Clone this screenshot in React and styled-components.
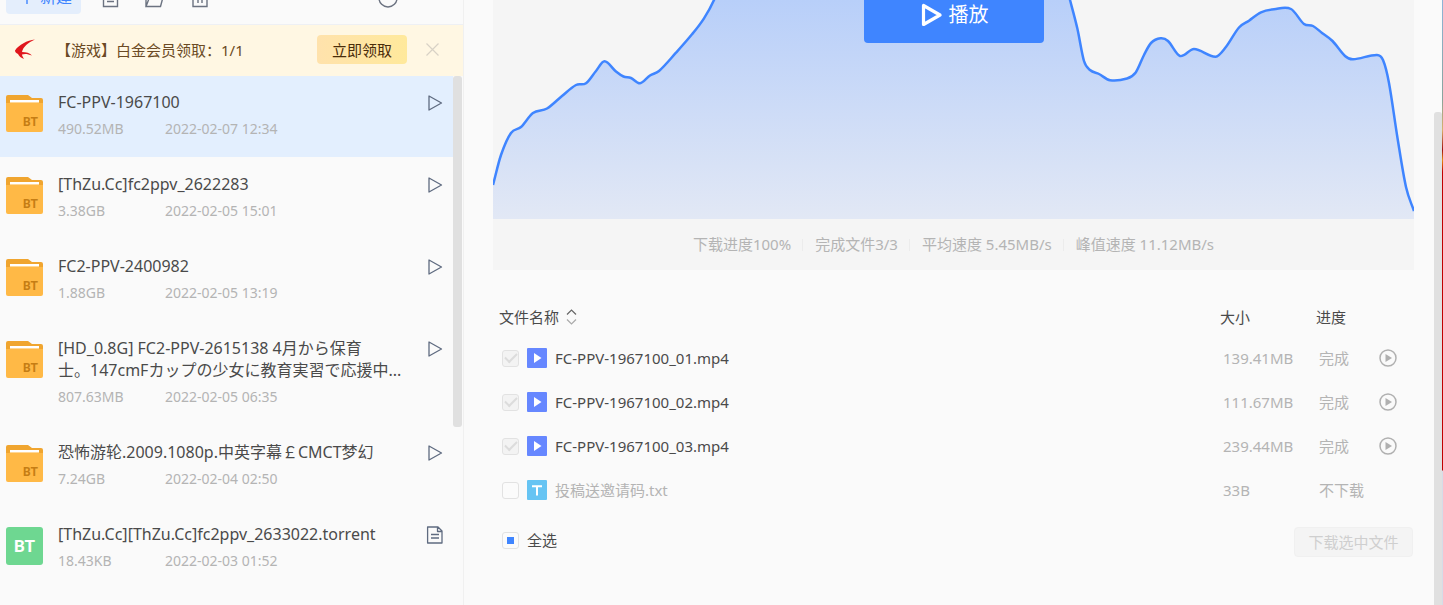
import { useEffect, useRef } from "react";
import styled, { createGlobalStyle, css } from "styled-components";

const tasks = [
  { name: "FC-PPV-1967100", size: "490.52MB", date: "2022-02-07 12:34", type: "folder", active: true },
  { name: "[ThZu.Cc]fc2ppv_2622283", size: "3.38GB", date: "2022-02-05 15:01", type: "folder" },
  { name: "FC2-PPV-2400982", size: "1.88GB", date: "2022-02-05 13:19", type: "folder" },
  {
    name: "[HD_0.8G] FC2-PPV-2615138 4月から保育\n士。147cmFカップの少女に教育実習で応援中...",
    size: "807.63MB",
    date: "2022-02-05 06:35",
    type: "folder",
  },
  { name: "恐怖游轮.2009.1080p.中英字幕￡CMCT梦幻", size: "7.24GB", date: "2022-02-04 02:50", type: "folder" },
  { name: "[ThZu.Cc][ThZu.Cc]fc2ppv_2633022.torrent", size: "18.43KB", date: "2022-02-03 01:52", type: "torrent" },
];

const files = [
  { name: "FC-PPV-1967100_01.mp4", size: "139.41MB", state: "完成", done: true },
  { name: "FC-PPV-1967100_02.mp4", size: "111.67MB", state: "完成", done: true },
  { name: "FC-PPV-1967100_03.mp4", size: "239.44MB", state: "完成", done: true },
  { name: "投稿送邀请码.txt", size: "33B", state: "不下载", done: false },
];

const stats = ["下载进度100%", "完成文件3/3", "平均速度 5.45MB/s", "峰值速度 11.12MB/s"];

// download speed samples, [x, y] in chart units
const speed = [
  [0, 185], [8, 155], [18, 133], [28, 127], [40, 113], [54, 108.5], [69, 96], [83, 85], [93, 83.3],
  [103, 71], [111.5, 61.3], [123, 71.5], [130.5, 76.5], [138, 78], [147, 83.3], [157, 75.5], [166, 71],
  [183, 52.7], [199, 34.3], [211, 18.3], [221, 0], [240, -48], [300, -140], [520, -140], [565, -45],
  [577, 0], [584.3, 28.3], [591, 61], [597, 70], [606, 74], [617, 80.2], [634, 78.5], [642.7, 72.5],
  [651, 55], [658, 43], [667.5, 38.3], [675, 41], [687, 56], [701, 49], [722.7, 56.7], [732.7, 47.3],
  [746, 27.5], [756, 20.7], [768, 12.3], [781, 9.3], [798, 9], [811, 24], [820, 26], [829, 33],
  [839.5, 41], [852, 56], [860, 59.3], [884, 55], [890, 60], [896, 83], [904.5, 138], [913, 187], [921, 211],
];

const slopeAt = (pts, i) => {
  const [ax, ay] = pts[i - 1] || pts[i];
  const [bx, by] = pts[i + 1] || pts[i];
  return (by - ay) / (bx - ax);
};

const toCurve = (pts) =>
  pts.reduce((d, [x, y], i) => {
    if (i === 0) return `M${x} ${y}`;
    const [px, py] = pts[i - 1];
    const h = (x - px) / 3;
    return `${d}C${px + h} ${py + h * slopeAt(pts, i - 1)} ${x - h} ${y - h * slopeAt(pts, i)} ${x} ${y}`;
  }, "");

const curve = toCurve(speed);

export default function App() {
  return (
    <>
      <GlobalStyle />
      <Page>
        <Sidebar>
          <Toolbar />
          <Notice />
          <TaskArea>
            <TaskList>
              {tasks.map((task) => (
                <TaskItem key={task.name} {...task} />
              ))}
            </TaskList>
            <ListGutter>
              <ListThumb />
            </ListGutter>
          </TaskArea>
        </Sidebar>
        <Main>
          <SpeedPanel />
          <FileTable />
          <Footer>
            <SelectAll />
            <DownloadButton type="button" disabled>
              下载选中文件
            </DownloadButton>
          </Footer>
        </Main>
        <PageGutter>
          <PageThumb />
        </PageGutter>
        <WindowEdge />
      </Page>
    </>
  );
}

const Toolbar = () => (
  <ToolbarWrap>
    <NewButton type="button">
      <svg width="14" height="14" viewBox="0 0 14 14" stroke="currentColor" strokeWidth="1.4">
        <path d="M7 0v14M0 7h14" />
      </svg>
      新建
    </NewButton>
    <ToolButton type="button" aria-label="file" $left={21}>
      <svg width="17" height="20" viewBox="0 0 17 20">
        <path d="M1.5 1.5h14v17h-14zM5 9h7M5 13.5h7" />
      </svg>
    </ToolButton>
    <ToolButton type="button" aria-label="folder" $left={26}>
      <svg width="20" height="20" viewBox="0 0 20 20">
        <path d="M1 18.5V2.500h6l2 3h7v3M1 18.500h14.500l3.500-13H6z" />
      </svg>
    </ToolButton>
    <ToolButton type="button" aria-label="delete" $left={26}>
      <svg width="18" height="20" viewBox="0 0 18 20">
        <path d="M2 4.500v14h14v-14M0 4.500h18M6 1.500h6M7 9v6M11 9v6" />
      </svg>
    </ToolButton>
    <ToolButton type="button" aria-label="search" $end>
      <svg width="20" height="20" viewBox="0 0 20 20">
        <circle cx="10" cy="10" r="9" />
      </svg>
    </ToolButton>
  </ToolbarWrap>
);

const Notice = () => (
  <NoticeWrap>
    <svg width="22" height="22" viewBox="0 0 22 22">
      <path
        fill="#e0161c"
        d="M21 .5C13 1.500 5 5.500 1 11.500c0 1.500 1 2.500 3 3.500 1 2 3 4 6 5-1-2-2-3-2-4.500 3-1 6-.5 10 1-2-2.500-6-3.500-10-3.500C9 8 14 3.500 21 .5z"
      />
    </svg>
    <NoticeText>【游戏】白金会员领取：1/1</NoticeText>
    <ClaimButton type="button">立即领取</ClaimButton>
    <CloseButton type="button" aria-label="close">
      <svg width="13" height="13" viewBox="0 0 13 13" stroke="currentColor" strokeWidth="1.2">
        <path d="M.5.5l12 12M12.500.5l-12 12" />
      </svg>
    </CloseButton>
  </NoticeWrap>
);

const TaskItem = ({ name, size, date, type, active }) => (
  <TaskRow $active={active}>
    {type === "folder" ? <FolderIcon /> : <TorrentIcon>BT</TorrentIcon>}
    <TaskDesc>
      <TaskName>{name}</TaskName>
      <TaskMeta>
        <span>{size}</span>
        <span>{date}</span>
      </TaskMeta>
    </TaskDesc>
    <RowButton type="button" aria-label={type === "folder" ? "play" : "open"}>
      {type === "folder" ? (
        <svg width="16" height="18" viewBox="0 0 16 18">
          <path d="M2 2v14l12.500-7z" />
        </svg>
      ) : (
        <svg width="18" height="18" viewBox="0 0 18 18">
          <path d="M1.600 1h10.400l4 4v12h-14.400zM11.500 1v4.500H16M5 8.500h8M5 12h8" />
        </svg>
      )}
    </RowButton>
  </TaskRow>
);

const FolderIcon = () => (
  <FolderWrap>
    <svg width="37" height="37" viewBox="0 0 37 37">
      <path fill="#f0a52f" d="M2 0h20l4 3h9a2 2 0 0 1 2 2v10H0V2a2 2 0 0 1 2-2z" />
      <path fill="#fff" d="M4 5h29v2H4z" />
      <path fill="#ffd795" d="M4 7h29v1H4z" />
      <path fill="#ffb946" d="M0 8h37v27a2 2 0 0 1-2 2H2a2 2 0 0 1-2-2z" />
    </svg>
    <span>BT</span>
  </FolderWrap>
);

const SpeedPanel = () => (
  <Panel>
    <Chart viewBox="0 0 921 219" preserveAspectRatio="none">
      <defs>
        <linearGradient id="speedFill" x1="0" y1="0" x2="0" y2="219" gradientUnits="userSpaceOnUse">
          <stop offset="0" stopColor="#b8cff9" />
          <stop offset="1" stopColor="#e2e8f5" />
        </linearGradient>
      </defs>
      <path d={`${curve}V219H0z`} fill="url(#speedFill)" />
      <path d={curve} fill="none" stroke="#3f85ff" strokeWidth="2.5" />
    </Chart>
    <PlayButton type="button">
      <svg width="21" height="24" viewBox="0 0 21 24" fill="none" stroke="currentColor" strokeWidth="3.200" strokeLinejoin="round">
        <path d="M2.500 2.500v19L19 12z" />
      </svg>
      播放
    </PlayButton>
    <Stats>
      {stats.map((stat) => (
        <li key={stat}>{stat}</li>
      ))}
    </Stats>
  </Panel>
);

const FileTable = () => (
  <Table>
    <thead>
      <tr>
        <th>
          <SortButton type="button">
            文件名称
            <svg width="11" height="16" viewBox="0 0 11 16" fill="none">
              <path d="M1 5.500L5.500 1 10 5.500" stroke="#666" strokeWidth="1.2" />
              <path d="M1 10.500L5.500 15l4.500-4.500" stroke="#aaa" strokeWidth="1.2" />
            </svg>
          </SortButton>
        </th>
        <SizeHead>大小</SizeHead>
        <StateHead>进度</StateHead>
        <ActionHead aria-label="play" />
      </tr>
    </thead>
    <tbody>
      {files.map(({ name, size, state, done }) => (
        <tr key={name}>
          <td>
            <FileLabel $muted={!done}>
              <Checkbox type="checkbox" defaultChecked={done} disabled={done} />
              {done ? <VideoIcon /> : <TextIcon />}
              {name}
            </FileLabel>
          </td>
          <td>{size}</td>
          <td>{state}</td>
          <td>
            {done && (
              <CircleButton type="button" aria-label="play">
                <svg width="18" height="18" viewBox="0 0 18 18">
                  <circle cx="9" cy="9" r="8" fill="none" stroke="currentColor" strokeWidth="1.500" />
                  <path d="M6.500 5v8L13 9z" fill="currentColor" />
                </svg>
              </CircleButton>
            )}
          </td>
        </tr>
      ))}
    </tbody>
  </Table>
);

const VideoIcon = () => (
  <svg width="20" height="20" viewBox="0 0 20 20">
    <rect width="20" height="20" rx="1" fill="#6687ff" />
    <path d="M7 5v10l7.500-5z" fill="#fff" />
  </svg>
);

const TextIcon = () => (
  <svg width="20" height="20" viewBox="0 0 20 20">
    <rect width="20" height="20" rx="1" fill="#66c4f3" />
    <path d="M5 6.200h10M10 6v9.500" stroke="#fff" strokeWidth="2" />
  </svg>
);

const SelectAll = () => {
  const ref = useRef(null);

  useEffect(() => {
    ref.current.indeterminate = true;
  }, []);

  return (
    <AllLabel>
      <Checkbox type="checkbox" ref={ref} />
      全选
    </AllLabel>
  );
};

const GlobalStyle = createGlobalStyle`
  * {
    box-sizing: border-box;
  }
  body {
    margin: 0;
    overflow: hidden;
    background: #fafafa;
    color: #4a4a4a;
    font-family: "Noto Sans", "Noto Sans CJK SC", sans-serif;
    font-size: 15px;
    line-height: 22px;
  }
  ul {
    margin: 0;
    padding: 0;
    list-style: none;
  }
  button {
    border: 0;
    padding: 0;
    background: none;
    color: inherit;
    font: inherit;
  }
  svg {
    display: block;
    flex-shrink: 0;
  }
`;

const Page = styled.div`
  display: flex;
  height: 100vh;
  overflow: hidden;
`;

const Sidebar = styled.aside`
  display: flex;
  flex-direction: column;
  flex: 0 0 464px;
  border-right: 1px solid #f0f0f0;
`;

const ToolbarWrap = styled.div`
  display: flex;
  align-items: flex-end;
  height: 25px;
  padding: 0 65px 10px 6px;
  border-bottom: 1px solid #eef0f4;
  overflow: hidden;
`;

const NewButton = styled.button`
  display: flex;
  align-items: center;
  flex-shrink: 0;
  gap: 6px;
  width: 75px;
  height: 34px;
  padding-left: 14px;
  border-radius: 4px;
  background: #e4eefc;
  color: #3f85ff;
  font-size: 16px;
`;

const ToolButton = styled.button`
  margin: 0 0 6px ${(props) => (props.$end ? "auto" : `${props.$left}px`)};

  svg {
    fill: none;
    stroke: #6b7280;
    stroke-width: 1.4;
  }
`;

const NoticeWrap = styled.div`
  display: flex;
  align-items: center;
  height: 51px;
  padding: 0 24px 2px 14px;
  background: #fff7e3;
`;

const NoticeText = styled.p`
  flex: 1;
  margin: 0 0 0 20px;
  color: #6b4a24;
`;

const ClaimButton = styled.button`
  width: 90px;
  height: 29px;
  border-radius: 4px;
  background: linear-gradient(90deg, #ffe2ac, #ffe99c);
  color: #4a2c0a;
`;

const CloseButton = styled.button`
  margin-left: 19px;
  color: #d8d2c6;
`;

const TaskArea = styled.div`
  display: flex;
  flex: 1;
  min-height: 0;
`;

const TaskList = styled.ul`
  flex: 1;
  min-width: 0;
`;

const ListGutter = styled.div`
  flex: 0 0 10px;
`;

const ListThumb = styled.div`
  width: 9px;
  height: 351px;
  border-radius: 3px;
  background: #e0e0e0;
`;

const TaskRow = styled.li`
  display: flex;
  align-items: flex-start;
  margin-bottom: 1px;
  padding: 15px 9px 18px 6px;
  background: ${(props) => (props.$active ? "#e3effe" : "transparent")};
`;

const btText = css`
  font-family: Roboto, sans-serif;
  font-weight: 700;
`;

const FolderWrap = styled.div`
  position: relative;
  margin-top: 4px;

  span {
    ${btText}
    position: absolute;
    right: 5px;
    bottom: 3px;
    color: #c57d14;
    font-size: 12px;
    line-height: 14px;
  }
`;

const TorrentIcon = styled.div`
  ${btText}
  width: 37px;
  height: 38px;
  margin-top: 4px;
  border-radius: 3px;
  background: #6ed791;
  color: #fff;
  font-size: 17px;
  line-height: 38px;
  text-align: center;
`;

const TaskDesc = styled.div`
  flex: 1;
  min-width: 0;
  margin-left: 15px;
`;

const TaskName = styled.div`
  max-width: 350px;
  margin-bottom: 6px;
  font-size: 16px;
  white-space: pre-line;
`;

const TaskMeta = styled.div`
  display: grid;
  grid-template-columns: 107px 1fr;
  color: #b4b4b4;
  font-size: 14px;
  line-height: 20px;
`;

const RowButton = styled.button`
  display: flex;
  justify-content: center;
  width: 18px;
  margin-top: 3px;

  svg {
    fill: none;
    stroke: #5f6b80;
    stroke-width: 1.3;
    stroke-linejoin: round;
  }
`;

const Main = styled.main`
  flex: 1;
  min-width: 0;
  padding: 0 20px 0 29px;
`;

const Panel = styled.section`
  position: relative;
  margin-bottom: 28px;
  background: #f5f5f5;
`;

const Chart = styled.svg`
  width: 100%;
  height: 219px;
`;

const PlayButton = styled.button`
  position: absolute;
  top: -13px;
  left: 50%;
  display: flex;
  align-items: center;
  justify-content: center;
  gap: 7px;
  width: 180px;
  height: 56px;
  padding-left: 2px;
  border-radius: 4px;
  background: #3f85ff;
  color: #fff;
  font-size: 20px;
  transform: translateX(-50%);
`;

const Stats = styled.ul`
  display: flex;
  justify-content: center;
  height: 51px;
  color: #b4b4b4;
  line-height: 51px;

  li + li {
    display: flex;
    align-items: center;
  }
  li + li::before {
    content: "";
    width: 1px;
    height: 12px;
    margin: 0 12px 0 11px;
    background: #ececec;
  }
`;

const Table = styled.table`
  width: 100%;
  border-collapse: collapse;
  table-layout: fixed;

  th {
    height: 38px;
    padding: 0;
    font-weight: 400;
    text-align: left;
  }
  th:first-child {
    padding-left: 6px;
  }
  td {
    height: 44px;
    padding: 0 0 0 3px;
    color: #b4b4b4;
  }
  td:first-child {
    padding-left: 9px;
  }
  td:last-child {
    padding-left: 0;
  }
`;

const SizeHead = styled.th`
  width: 96px;
`;

const StateHead = styled.th`
  width: 63px;
`;

const ActionHead = styled.th`
  width: 35px;
`;

const SortButton = styled.button`
  display: flex;
  align-items: center;
  gap: 7px;
`;

const FileLabel = styled.label`
  display: flex;
  align-items: center;
  gap: 8px;
  color: ${(props) => (props.$muted ? "#b4b4b4" : "#4a4a4a")};
`;

const AllLabel = styled.label`
  display: flex;
  align-items: center;
  gap: 8px;
  height: 26px;
`;

const Checkbox = styled.input`
  appearance: none;
  display: grid;
  place-items: center;
  flex-shrink: 0;
  width: 17px;
  height: 17px;
  margin: 0;
  border: 1px solid #e2e2e2;
  border-radius: 3px;
  background: #fbfbfb;

  &:disabled {
    background: #f3f3f3;
  }
  &:checked::after {
    content: "";
    width: 10px;
    height: 5px;
    margin-bottom: 3px;
    border: solid #dcdcdc;
    border-width: 0 0 2px 2px;
    transform: rotate(-45deg);
  }
  &:indeterminate::after {
    content: "";
    width: 7px;
    height: 7px;
    background: #3f85ff;
  }
`;

const CircleButton = styled.button`
  display: block;
  color: #b0b0b0;
`;

const Footer = styled.footer`
  display: flex;
  align-items: flex-start;
  justify-content: space-between;
  margin-top: 15px;
  padding: 0 1px 0 9px;
`;

const DownloadButton = styled.button`
  width: 119px;
  height: 30px;
  border: 1px solid #f0f0f0;
  border-radius: 4px;
  background: #f4f4f4;
  color: #cfcfcf;
`;

const PageGutter = styled.div`
  flex: 0 0 8px;
  padding-top: 112px;
`;

const PageThumb = styled.div`
  height: 100%;
  border-radius: 3px 3px 0 0;
  background: #e0e0e0;
`;

const WindowEdge = styled.div`
  flex: 0 0 1px;
  background: linear-gradient(#8fb4d8 0, #8aa39c 100px, #d9b06a 130px, #a01010 150px, #e88a10 160px, #c00000 172px, #c00000 470px, #d5dce8 471px);
`;
